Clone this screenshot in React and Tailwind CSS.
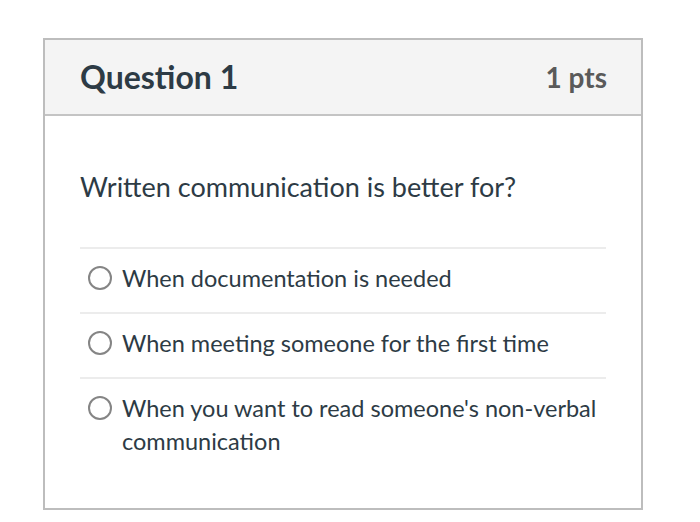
import React from "react";

const options = [
  "When documentation is needed",
  "When meeting someone for the first time",
  "When you want to read someone's non-verbal communication",
];

export default function App() {
  return (
    <div className="w-[700px] h-[522px] bg-white pt-[38px] pl-[43px] font-['Lato','Liberation_Sans',sans-serif]">
      <div className="w-[600px] h-[472px] border-2 border-[#bdbdbd]">
        <div className="h-[76px] bg-[#f4f4f4] border-b-2 border-[#c4c4c4] flex items-center justify-between pl-[35px] pr-[34px]">
          <h2 className="text-[32px] font-bold text-[#2d3b45]">Question 1</h2>
          <span className="text-[28px] font-bold text-[#5a5a5a]">1 pts</span>
        </div>

        <div className="px-[35px] pt-[53px]">
          <p className="text-[27px] text-[#2d3b45] leading-[36px]">Written communication is better for?</p>

          <div className="mt-[42px] border-t-2 border-[#ececec]">
            {options.map((opt, i) => (
              <div
                key={i}
                className={`flex items-start gap-[10px] pl-[8px] pr-[6px] pt-[13px] pb-[17px] ${i < options.length - 1 ? "border-b-2 border-[#ececec]" : ""}`}
              >
                <span className="mt-[4px] shrink-0 w-[24px] h-[24px] rounded-full border-2 border-[#858585] bg-white" />
                <span className="text-[23.5px] leading-[33px] text-[#2d3b45]">{opt}</span>
              </div>
            ))}
          </div>
        </div>
      </div>
    </div>
  );
}
